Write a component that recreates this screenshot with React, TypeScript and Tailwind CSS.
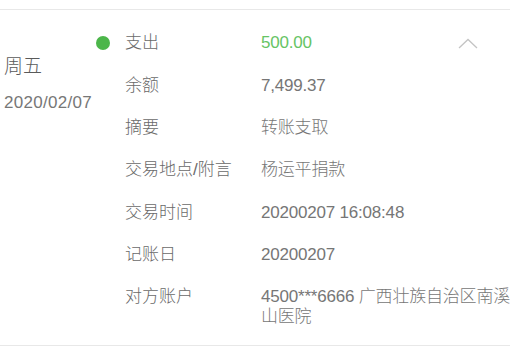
const rows: { label: string; value: string; green?: boolean }[] = [
  { label: '支出', value: '500.00', green: true },
  { label: '余额', value: '7,499.37' },
  { label: '摘要', value: '转账支取' },
  { label: '交易地点/附言', value: '杨运平捐款' },
  { label: '交易时间', value: '20200207 16:08:48' },
  { label: '记账日', value: '20200207' },
  { label: '对方账户', value: '4500***6666 广西壮族自治区南溪山医院' },
];

export default function App() {
  return (
    <div
      className="w-[510px] h-[349px] bg-white overflow-hidden pt-[9px] font-light"
      style={{ fontFamily: '"Liberation Sans", "Noto Sans CJK SC", sans-serif' }}
    >
      <div className="border-t border-b border-[#e8e8e8] flex pt-[12px] pb-[6px]">
        <div className="w-[96px] shrink-0 pl-[4px] pt-[32px]">
          <div className="text-[19px] leading-[26px] text-[#5a5a5a]">周五</div>
          <div className="text-[17px] leading-[22px] tracking-[0.3px] text-[#777] mt-[12px]">2020/02/07</div>
        </div>
        <div className="w-[29px] shrink-0 pt-[14px]">
          <div className="w-[14px] h-[14px] rounded-full bg-[#4cb64a]" />
        </div>
        <div className="flex-1 min-w-0">
          {rows.map((r, i) => (
            <div key={i} className="flex py-[11.2px] text-[17px] leading-[20px] relative">
              <div className="w-[136px] shrink-0 text-[#6a6a6a]">{r.label}</div>
              <div className={`flex-1 min-w-0 tracking-[-0.2px] ${r.green ? 'text-[#66c464]' : 'text-[#767676]'}`}>
                {r.value}
              </div>
              {i === 0 && (
                <svg
                  className="absolute right-[32px] top-[16px]"
                  width="20"
                  height="11"
                  viewBox="0 0 20 11"
                  fill="none"
                  stroke="#c4c4c4"
                  strokeWidth="1.3"
                >
                  <path d="M1 10 L10 1.5 L19 10" />
                </svg>
              )}
            </div>
          ))}
        </div>
      </div>
    </div>
  );
}
